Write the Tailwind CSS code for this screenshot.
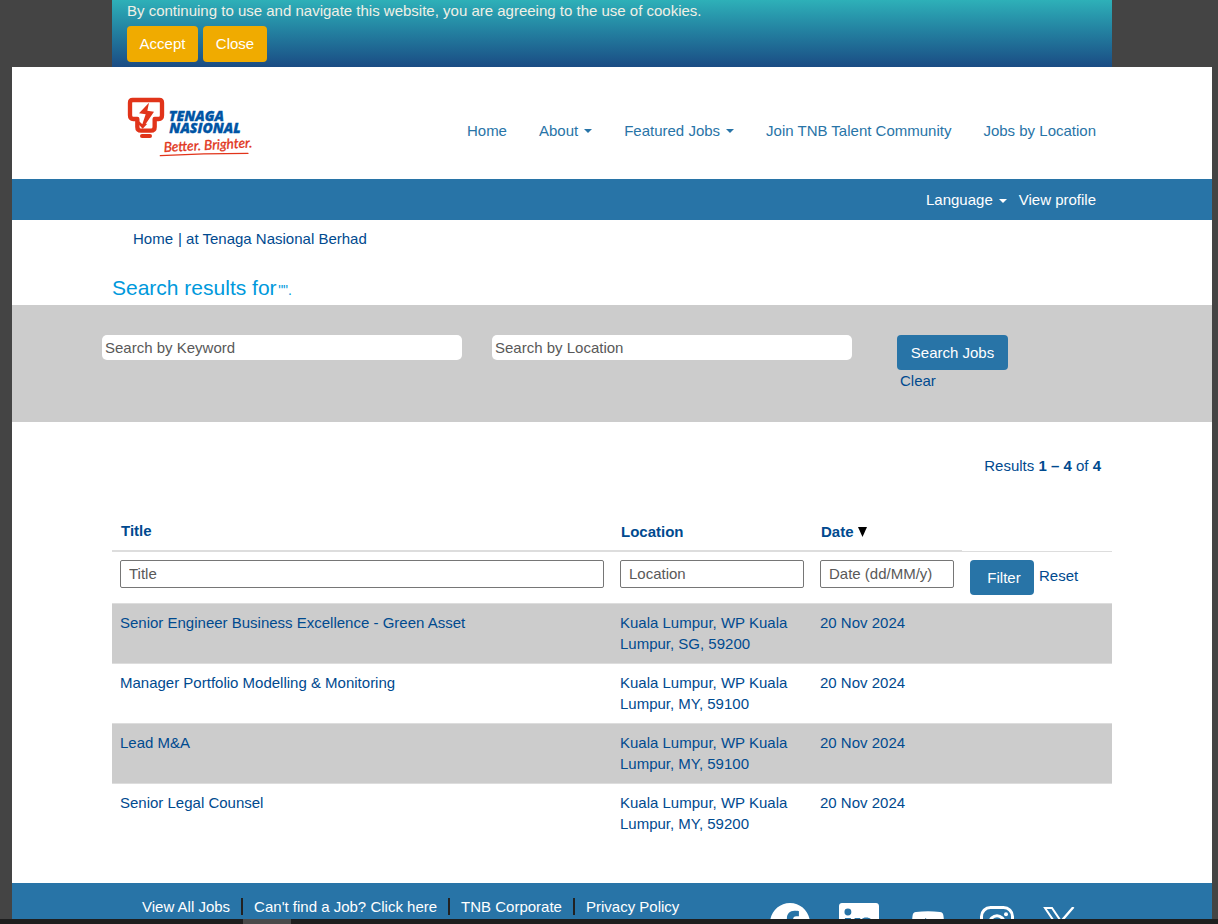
<!DOCTYPE html>
<html lang="en">
<head>
<meta charset="utf-8">
<meta name="viewport" content="width=device-width, initial-scale=1">
<title>Search results - Tenaga Nasional Berhad</title>
<script src="https://cdn.jsdelivr.net/npm/@tailwindcss/browser@4"></script>
</head>
<body class="flex h-screen flex-col overflow-hidden bg-[#444444] font-['Liberation_Sans',Arial,sans-serif] text-[15px] leading-[21px] text-[#004a8f]">
<div class="min-h-0 flex-1 overflow-hidden pr-1.5 pl-3">

  <section aria-label="Cookie notice" class="mx-auto h-[67px] max-w-[1000px] bg-linear-to-b from-[#2eb0b8] to-[#1b4c84] px-[15px] text-[#f0f0e6]">
    <p>By continuing to use and navigate this website, you are agreeing to the use of cookies.</p>
    <div class="mt-[5px] flex gap-[5px] text-white">
      <button class="h-9 w-[71px] rounded bg-[#f0ab00] pb-0.5">Accept</button>
      <button class="h-9 w-16 rounded bg-[#f0ab00] pb-0.5">Close</button>
    </div>
  </section>

  <div class="bg-white">
    <header>
      <div class="mx-auto flex h-28 max-w-[1000px] items-center justify-between px-4 pt-3.5">
        <a href="#" aria-label="Tenaga Nasional" class="-mt-0.5">
          <svg class="h-[62px] w-[126px] overflow-visible" viewBox="54 40 378 186">
            <g fill="none" stroke="#e1341a" stroke-linejoin="round" stroke-linecap="round">
              <path stroke-width="13" d="M68 46H148Q156 46 156 54V92Q156 103 146 103H134V127Q134 138 123 138H93Q82 138 82 127V103H70Q60 103 60 92V54Q60 46 68 46Z"/>
              <path stroke-width="12" d="M96 154H120"/>
            </g>
            <path fill="#e1341a" d="M117 54L87 86L107 89L97 119L84 107L80 113L98 132L112 117L107 118L132 81L112 78Z"/>
            <g fill="#0054a4" stroke="#0054a4" stroke-width="1" font-family="'Open Sans', sans-serif" font-weight="800" font-style="italic" font-size="42">
              <text x="176" y="110">TENAGA</text>
              <text x="178" y="145">NASIONAL</text>
            </g>
            <text x="162" y="202" transform="rotate(-3 162 202)" fill="#e1341a" stroke="#e1341a" stroke-width="1" font-family="Lato, sans-serif" font-style="italic" font-size="41">Better. Brighter.</text>
            <path fill="none" stroke="#e1341a" stroke-width="4" stroke-linecap="round" d="M151 213Q280 206 414 206"/>
          </svg>
        </a>
        <nav aria-label="Main" class="flex gap-8 text-[#2874a7]">
          <a href="#">Home</a>
          <a href="#" class="flex items-center gap-1.5">About <svg class="mt-0.5 h-1 w-2" viewBox="0 0 8 4"><path fill="currentColor" d="M0 0H8L4 4Z"/></svg></a>
          <a href="#" class="flex items-center gap-1.5">Featured Jobs <svg class="mt-0.5 h-1 w-2" viewBox="0 0 8 4"><path fill="currentColor" d="M0 0H8L4 4Z"/></svg></a>
          <a href="#">Join TNB Talent Community</a>
          <a href="#">Jobs by Location</a>
        </nav>
      </div>
      <div class="bg-[#2874a7] text-white">
        <div class="mx-auto flex h-[41px] max-w-[1000px] items-center justify-end gap-3 px-4">
          <a href="#" class="flex items-center gap-1.5">Language <svg class="mt-0.5 h-1 w-2" viewBox="0 0 8 4"><path fill="currentColor" d="M0 0H8L4 4Z"/></svg></a>
          <a href="#">View profile</a>
        </div>
      </div>
    </header>

    <main>
      <div class="mx-auto max-w-[1000px] pt-2">
        <nav aria-label="Breadcrumb" class="flex gap-[5px] px-[21px]"><a href="#">Home</a><span>| at Tenaga Nasional Berhad</span></nav>
        <h1 class="pt-[27px] pb-[5px] text-xl leading-6 text-[#0099dc]"><span class="text-[21px]">Search results for</span> <span class="-ml-1 text-sm">"".</span></h1>
      </div>

      <form class="bg-[#cccccc]" onsubmit="return false">
        <div class="mx-auto flex h-[117px] max-w-[1020px] items-start pt-[30px]">
          <input type="text" aria-label="Search by Keyword" placeholder="Search by Keyword" class="mr-[30px] h-[25px] w-[360px] rounded-[5px] bg-white px-[3px] placeholder:text-[#595959]">
          <input type="text" aria-label="Search by Location" placeholder="Search by Location" class="mr-[45px] h-[25px] w-[360px] rounded-[5px] bg-white px-[3px] placeholder:text-[#595959]">
          <div class="flex flex-col items-start">
            <button class="h-[35px] w-[111px] rounded bg-[#2874a7] text-white">Search Jobs</button>
            <a href="#" class="ml-[3px]">Clear</a>
          </div>
        </div>
      </form>

      <div class="mx-auto max-w-[1000px] pt-[33px] pb-10">
        <p class="mb-[35px] pr-[11px] text-right">Results <b>1 – 4</b> of <b>4</b></p>
        <table class="w-full table-fixed border-separate border-spacing-0 text-left">
          <colgroup><col class="w-1/2"><col class="w-1/5"><col class="w-[15%]"><col class="w-[15%]"></colgroup>
          <thead>
            <tr class="h-[41px]">
              <th class="border-b-2 border-[#dddddd] px-[9px]"><a href="#">Title</a></th>
              <th class="border-b-2 border-[#dddddd] px-[9px] pt-0.5"><a href="#">Location</a></th>
              <th class="border-b-2 border-[#dddddd] px-[9px] pt-0.5"><div class="flex items-center gap-1"><a href="#">Date</a><svg class="h-[10px] w-[9px]" viewBox="0 0 9 10"><path fill="#000" d="M0 0H9L4.500 10Z"/></svg></div></th>
              <td class="border-b border-[#dddddd]"></td>
            </tr>
            <tr class="h-[51px] align-top">
              <td class="px-2 pt-2"><input type="text" aria-label="Filter by title" placeholder="Title" class="block h-7 w-full rounded-xs border border-[#767676] px-2 pb-0.5 placeholder:text-[#595959]"></td>
              <td class="px-2 pt-2"><input type="text" aria-label="Filter by location" placeholder="Location" class="block h-7 w-full rounded-xs border border-[#767676] px-2 pb-0.5 placeholder:text-[#595959]"></td>
              <td class="px-2 pt-2"><input type="text" aria-label="Filter by date" placeholder="Date (dd/MM/y)" class="block h-7 w-full rounded-xs border border-[#767676] px-2 pb-0.5 placeholder:text-[#595959]"></td>
              <td class="px-2 pt-2"><div class="flex gap-[5px]"><button class="h-[35px] w-16 rounded bg-[#2874a7] pl-1 text-white">Filter</button><a href="#" class="pt-[5px]">Reset</a></div></td>
            </tr>
          </thead>
          <tbody class="align-top [&_td]:border-t [&_td]:border-[#dddddd] [&_td]:px-2 [&_td]:pt-2 [&_td]:pb-[9px]">
            <tr class="bg-[#cccccc]"><td><a href="#">Senior Engineer Business Excellence - Green Asset</a></td><td>Kuala Lumpur, WP Kuala Lumpur, SG, 59200</td><td>20 Nov 2024</td><td></td></tr>
            <tr><td><a href="#">Manager Portfolio Modelling &amp; Monitoring</a></td><td>Kuala Lumpur, WP Kuala Lumpur, MY, 59100</td><td>20 Nov 2024</td><td></td></tr>
            <tr class="bg-[#cccccc]"><td><a href="#">Lead M&amp;A</a></td><td>Kuala Lumpur, WP Kuala Lumpur, MY, 59100</td><td>20 Nov 2024</td><td></td></tr>
            <tr><td><a href="#">Senior Legal Counsel</a></td><td>Kuala Lumpur, WP Kuala Lumpur, MY, 59200</td><td>20 Nov 2024</td><td></td></tr>
          </tbody>
        </table>
      </div>
    </main>

    <footer class="bg-[#2874a7] text-white">
      <div class="mx-auto flex max-w-[1000px] items-start justify-between pr-[26px] pb-5 pl-[30px]">
        <nav aria-label="Footer" class="flex items-center gap-[11px] pt-[13px]">
          <a href="#">View All Jobs</a><span class="h-[17px] w-0.5 bg-[#222222]"></span>
          <a href="#">Can't find a Job? Click here</a><span class="h-[17px] w-0.5 bg-[#222222]"></span>
          <a href="#">TNB Corporate</a><span class="h-[17px] w-0.5 bg-[#222222]"></span>
          <a href="#">Privacy Policy</a>
        </nav>
        <div class="flex h-15 items-center pt-5">
          <a href="#" aria-label="Facebook" class="flex w-[69px] justify-center"><svg class="size-10" viewBox="0 0 24 24" fill="currentColor"><path d="M24 12.070C24 5.400 18.630 0 12 0S0 5.400 0 12.070C0 18.100 4.390 23.090 10.130 24v-8.440H7.080v-3.490h3.050V9.410c0-3.020 1.790-4.690 4.530-4.690 1.310 0 2.690.24 2.690.24v2.970h-1.520c-1.490 0-1.950.93-1.950 1.880v2.260h3.320l-.53 3.490h-2.790V24C19.610 23.090 24 18.100 24 12.070z"/></svg></a>
          <a href="#" aria-label="LinkedIn" class="flex w-[69px] justify-center"><svg class="size-10" viewBox="0 0 24 24" fill="currentColor"><path d="M20.450 20.450h-3.560v-5.570c0-1.330-.02-3.040-1.850-3.040-1.850 0-2.140 1.450-2.140 2.940v5.670H9.350V9h3.410v1.560h.05c.48-.9 1.640-1.850 3.370-1.850 3.600 0 4.270 2.370 4.270 5.460v6.280zM5.340 7.430a2.060 2.060 0 1 1 0-4.130 2.060 2.060 0 0 1 0 4.130zm1.780 13.020H3.560V9h3.560v11.450zM22.220 0H1.770C.79 0 0 .77 0 1.730v20.540C0 23.230.79 24 1.770 24h20.450c.98 0 1.780-.77 1.780-1.730V1.730C24 .77 23.200 0 22.220 0z"/></svg></a>
          <a href="#" aria-label="YouTube" class="flex w-[69px] justify-center"><svg class="h-6 w-8" viewBox="0 0 32 24" fill="currentColor"><path d="M4 1Q16 -.4 28 1Q31 1.300 31.400 4.500Q32.500 12 31.400 19.500Q31 22.700 28 23Q16 24.400 4 23Q1 22.700.6 19.500Q-.5 12 .6 4.500Q1 1.300 4 1ZM13 7V17L21 12Z"/></svg></a>
          <a href="#" aria-label="Instagram" class="flex w-[69px] justify-center"><svg class="size-[34px]" viewBox="0 0 34 34" fill="none" stroke="currentColor" stroke-width="3"><rect x="1.500" y="1.500" width="31" height="31" rx="9"/><circle cx="17" cy="17" r="7.200"/><circle cx="26" cy="8.200" r="2" fill="currentColor" stroke="none"/></svg></a>
          <a href="#" aria-label="X" class="flex w-[55px] justify-center"><svg class="h-[33px] w-8" viewBox="0 0 32 33" fill="none" stroke="currentColor"><path stroke-width="2" d="M2 1H9L30 32H23Z"/><path stroke-width="2.400" d="M30.500 0L18 14.500M14 19L1.500 33"/></svg></a>
        </div>
      </div>
    </footer>
  </div>
</div>
<div class="h-[5px] shrink-0 bg-[#1e1e1e] pl-[243px]"><div class="h-full w-12 bg-[#4a4a4a]"></div></div>
</body>
</html>
